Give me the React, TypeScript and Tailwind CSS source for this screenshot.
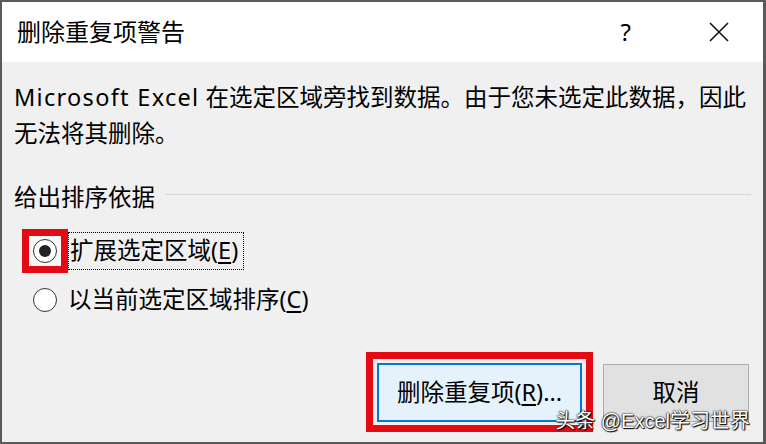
const font = "font-['Noto_Sans','Noto_Sans_CJK_SC',sans-serif]";

function Radio({ checked }: { checked?: boolean }) {
  return (
    <span className="flex h-[24px] w-[24px] items-center justify-center rounded-full border-[1.5px] border-[#333] bg-white">
      {checked && <span className="h-[12px] w-[12px] rounded-full bg-[#222]" />}
    </span>
  );
}

export default function App() {
  return (
    <div
      className={`relative flex h-[444px] w-[766px] flex-col overflow-hidden border-b-2 border-l-2 border-r-[3px] border-t-2 border-[#5a5a5a] bg-[#f0f0f0] text-black ${font}`}
    >
      {/* title bar */}
      <div className="flex h-[60px] shrink-0 items-center bg-white pl-[15px]">
        <span className="text-[24px] leading-none">删除重复项警告</span>
        <span className="ml-auto mr-[78px] text-[24px] leading-none">?</span>
        <svg className="mr-[34px]" width="20" height="20" viewBox="0 0 20 20">
          <path d="M1 1 L19 19 M19 1 L1 19" stroke="#111" strokeWidth="1.6" fill="none" />
        </svg>
      </div>

      {/* body */}
      <div className="flex flex-1 flex-col">
        <p className="mt-[17px] whitespace-nowrap pl-[12px] text-[23.5px] leading-[36px]">
          <span className="tracking-[1.3px]">Microsoft Excel</span> 在选定区域旁找到数据。由于您未选定此数据，因此
          <br />
          无法将其删除。
        </p>

        <div className="mt-[28px] flex h-[36px] items-center pl-[12px] pr-[12px]">
          <span className="text-[23.5px] leading-[36px]">给出排序依据</span>
          <div className="ml-[10px] mt-[-4px] h-[2px] flex-1 border-t border-[#d7d7d7] border-b-white" />
        </div>

        <div className="mt-[14px] flex h-[44px] items-center pl-[20px]">
          <span className="flex h-[44px] w-[46px] items-center justify-center border-[7px] border-[#e50914] bg-[#f7f7f7]">
            <Radio checked />
          </span>
          <span className="flex h-[38px] items-center border border-dotted border-black pl-[1px] pr-[5px] text-[23.5px]">
            扩展选定区域(<span className="underline underline-offset-[3px]">E</span>)
          </span>
        </div>

        <div className="mt-[5px] flex h-[44px] items-center pl-[20px]">
          <span className="flex h-[44px] w-[46px] items-center justify-center">
            <Radio />
          </span>
          <span className="text-[23.5px]">
            以当前选定区域排序(<span className="underline underline-offset-[3px]">C</span>)
          </span>
        </div>

        <div className="mt-[30px] flex items-start justify-end pr-[14px]">
          <div className="border-[7px] border-[#e50914] p-[4px] pb-[3px]">
            <button className="flex h-[59px] w-[205px] items-center justify-center border-2 border-[#0078d7] bg-[#e5f1fb] text-[23.5px]">
              删除重复项(<span className="underline underline-offset-[3px]">R</span>)...
            </button>
          </div>
          <button className="ml-[10px] mt-[12px] flex h-[58px] w-[146px] items-center justify-center border border-[#adadad] bg-[#e1e1e1] text-[23.5px]">
            取消
          </button>
        </div>
      </div>

      {/* watermark */}
      <span className="absolute bottom-[11px] right-[13px] font-['Liberation_Sans','Noto_Sans_CJK_SC',sans-serif] text-[20px] leading-none text-white [text-shadow:0_0_2px_#000,0_0_1px_#000,1px_1px_1px_#000]">
        头条 @Excel学习世界
      </span>
    </div>
  );
}
